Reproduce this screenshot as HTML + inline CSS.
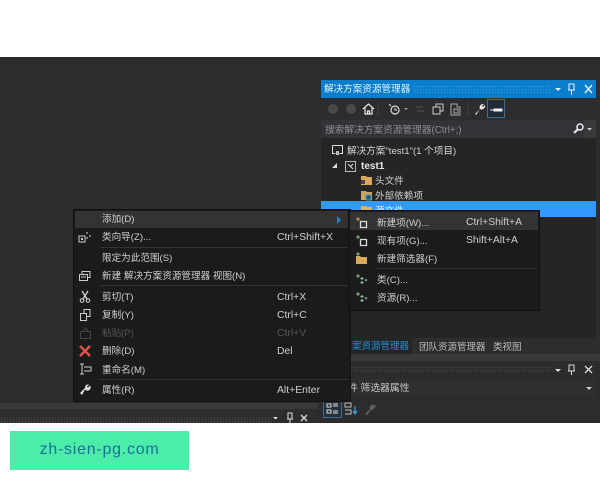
<!DOCTYPE html>
<html><head><meta charset="utf-8">
<style>
html,body{margin:0;padding:0;background:#fff}
#p{position:relative;width:600px;height:480px;overflow:hidden;background:#fff;font-family:"Liberation Sans","Noto Sans CJK SC",sans-serif;font-size:9.6px;color:#cfcfcf;filter:blur(.35px)}
#p div,#p svg{position:absolute}
.t{white-space:nowrap;line-height:14px;height:14px}
.s{font-size:10.400px}
.d{background-image:radial-gradient(#434346 35%,transparent 40%);background-size:3px 3px}
.db{background-image:radial-gradient(#2f93d8 35%,transparent 40%);background-size:3px 3px}
</style></head><body><div id="p">
<div style="left:0;top:57px;width:600px;height:366px;background:#2c2c2e"></div>

<!-- solution explorer -->
<div style="left:320px;top:79px;width:280px;height:261px;background:#2d2d30"></div>
<div style="left:321px;top:80px;width:275px;height:18px;background:#0a7dcc"></div>
<div class="db" style="left:413px;top:85px;width:138px;height:8px"></div>
<div class="t" style="left:324px;top:82px;color:#e4f2fb;font-size:9.600px;line-height:16px">解决方案资源管理器</div>
<svg style="left:550px;top:82px" width="46" height="14" viewBox="0 0 46 14"><path d="M5 6h6l-3 3z" fill="#e8f4fb"/><path d="M19 2h5v6h-5zM21.500 8v5M18 8h7" stroke="#e8f4fb" fill="none"/><path d="M35 3l7 8M42 3l-7 8" stroke="#e8f4fb" stroke-width="1.400"/></svg>
<div style="left:321px;top:98px;width:275px;height:22px;background:#2d2d30"></div>
<svg style="left:321px;top:98px" width="275" height="22" viewBox="0 0 275 22">
<circle cx="12" cy="11" r="5" fill="#4a4a4d"/><circle cx="30" cy="11" r="5" fill="#4a4a4d"/>
<path d="M42 11l5.500-5 5.500 5M44 10v6h7v-6M46.500 16v-3h2v3" stroke="#e8e8e8" fill="none" stroke-width="1.200"/>
<path d="M57 4v14" stroke="#3f3f42"/>
<circle cx="74" cy="12" r="4" stroke="#ddd" fill="none" stroke-width="1.200"/><path d="M74 10v2h2M68 6l2 2" stroke="#ddd" fill="none"/>
<path d="M83 10h4l-2 2z" fill="#999"/><path d="M95 9h7M103 13h-7" stroke="#555" fill="none"/>
<path d="M112 9h7v7h-7zM115 9V6h7v7h-3" stroke="#ccc" fill="none"/>
<path d="M130 6h6v3h3v8h-9zM133 11h4v4h-4z" stroke="#aaa" fill="none"/>
<path d="M147 4v14" stroke="#3f3f42"/>
<path d="M154 16l5-5a3.500 3.500 0 0 1 4-5l-2 2 1 1 2-2a3.500 3.500 0 0 1-5 4l-4 6z" fill="#e4e4e4"/>
<rect x="166.500" y="1.500" width="17" height="18" fill="#222a33" stroke="#3d6a8e"/><path d="M173 11h8v2h-8zM169 12h4" stroke="#eee" fill="#eee"/>
</svg>
<div style="left:321px;top:120px;width:275px;height:18px;background:#333337"></div>
<div class="t" style="left:325px;top:124px;color:#8e8e90;font-size:9.700px">搜索解决方案资源管理器(Ctrl+;)</div>
<div style="left:584px;top:120px;width:12px;height:18px;background:#3a3a3d"></div>
<svg style="left:571px;top:122px" width="24" height="14" viewBox="0 0 24 14"><circle cx="9" cy="5" r="3" stroke="#eee" fill="none" stroke-width="1.500"/><path d="M7 7l-4 4" stroke="#eee" stroke-width="2"/><path d="M16 6h5l-2.500 2.500z" fill="#ccc"/></svg>
<div style="left:321px;top:138px;width:275px;height:200px;background:#252526"></div>
<svg style="left:331px;top:144px" width="14" height="13" viewBox="0 0 14 13"><path d="M1.500 1.500h10v8h-3M1.500 1.500v8h3" stroke="#ddd" fill="none"/><path d="M5 7h3v4H5z" fill="#bbb"/></svg>
<div class="t" style="left:347px;top:145px;font-size:9.600px;color:#d6d6d6">解决方案"test1"(1 个项目)</div>
<svg style="left:329px;top:160px" width="30" height="13" viewBox="0 0 30 13"><path d="M3 8h5V3z" fill="#ddd"/><path d="M16.500 1.500h10v10h-10z" stroke="#bbb" fill="none"/><path d="M19 4l5 5M24 4l-3 3" stroke="#ddd"/></svg>
<div class="t" style="left:361px;top:160px;font-size:10px;font-weight:bold;color:#e6e6e6">test1</div>
<svg style="left:360px;top:174px" width="13" height="12" viewBox="0 0 13 12"><path d="M1 2h5l1 1h5v8H1z" fill="#d8a95b"/><path d="M1 6h4v4H1z" fill="#444"/></svg>
<div class="t" style="left:375px;top:175px;color:#d2d2d2">头文件</div>
<svg style="left:360px;top:189px" width="13" height="12" viewBox="0 0 13 12"><path d="M1 2h5l1 1h5v8H1z" fill="#c9a45f"/><path d="M6 6h5v5H6z" fill="#2c5566" stroke="#3fa0b8"/></svg>
<div class="t" style="left:375px;top:190px;color:#d2d2d2">外部依赖项</div>
<div style="left:321px;top:201px;width:275px;height:16px;background:#3399ff"></div>
<svg style="left:360px;top:205px" width="13" height="9" viewBox="0 0 13 9"><path d="M1 1h5l1 1h5v7H1z" fill="#d8b56b"/></svg>
<div class="t" style="left:375px;top:205px;color:#e8f3ff">源文件</div>

<!-- tabs + lower panel -->
<div style="left:350px;top:338px;width:250px;height:16px;background:#2d2d30"></div>
<div style="left:350px;top:338px;width:62px;height:16px;background:#252526"></div>
<div class="t" style="left:352px;top:340px;font-size:9.500px;color:#1f8fd8">案资源管理器</div>
<div class="t" style="left:419px;top:341px;font-size:9.500px;color:#bcbcbc">团队资源管理器</div>
<div class="t" style="left:493px;top:341px;font-size:9.500px;color:#bcbcbc">类视图</div>
<div style="left:350px;top:354px;width:250px;height:7px;background:#3a3a3c"></div>
<div class="d" style="left:350px;top:366px;width:203px;height:7px"></div>
<svg style="left:550px;top:362px" width="46" height="14" viewBox="0 0 46 14"><path d="M5 7h6l-3 3z" fill="#ddd"/><path d="M19 3h5v6h-5zM21.500 9v4M18 9h7" stroke="#ddd" fill="none"/><path d="M35 4l7 7M42 4l-7 7" stroke="#ddd" stroke-width="1.300"/></svg>
<div style="left:350px;top:379px;width:246px;height:18px;background:#2f2f32"></div>
<div class="t" style="left:348px;top:382px;font-size:9.800px;color:#c8c8c8">件 筛选器属性</div>
<svg style="left:585px;top:386px" width="8" height="6"><path d="M1 1h6L4 4z" fill="#ccc"/></svg>
<svg style="left:323px;top:400px" width="60" height="18" viewBox="0 0 60 18"><rect x=".5" y=".5" width="18" height="17" fill="#26303a" stroke="#3d6a8e"/><path d="M4 4h4v3H4zM4 10h4v3H4zM10 4h5M10 6h5M10 11h5M10 13h5" stroke="#ddd" fill="none"/><path d="M22 3h6v4h-6zM22 10h6v4h-6" stroke="#bbb" fill="none"/><path d="M32 6v7M30 11l2 3 2-3" stroke="#3d9de0" fill="none" stroke-width="1.300"/><path d="M42 14l5-5a3 3 0 0 1 4-4l2 1-2 3-3 1-4 5z" fill="#5e5e60"/></svg>

<!-- bottom left panel -->
<div style="left:0;top:403px;width:318px;height:6px;background:#3a3a3c"></div>
<div style="left:0;top:409px;width:318px;height:14px;background:#2d2d30"></div>
<div class="d" style="left:0;top:417px;width:272px;height:6px"></div>
<svg style="left:272px;top:412px" width="46" height="11" viewBox="0 0 46 11"><path d="M1 5h5L3.500 7.500z" fill="#ddd"/><path d="M16 1h4v6h-4zM18 7v4M15 7h6" stroke="#ddd" fill="none"/><path d="M29 3l6 6M35 3l-6 6" stroke="#ddd" stroke-width="1.300"/></svg>
<div style="left:0;top:423px;width:600px;height:57px;background:#fff"></div>

<!-- context menu -->
<div style="left:74px;top:210px;width:276px;height:191px;background:#1b1b1c;box-shadow:0 0 0 1px #111"></div>
<div style="left:75px;top:211px;width:274px;height:17px;background:#333334"></div>
<div style="left:100px;top:247px;width:248px;height:1px;background:#333335"></div>
<div style="left:100px;top:285px;width:248px;height:1px;background:#333335"></div>
<div style="left:100px;top:379px;width:248px;height:1px;background:#333335"></div>
<svg style="left:336px;top:216px" width="6" height="8"><path d="M1 0l4 4-4 4z" fill="#2f7fc0"/></svg>
<div class="t" style="left:102px;top:213px">添加(D)</div>
<div class="t" style="left:102px;top:231px">类向导(Z)...</div><div class="t s" style="left:277px;top:231px">Ctrl+Shift+X</div>
<div class="t" style="left:102px;top:252px">限定为此范围(S)</div>
<div class="t" style="left:102px;top:270px">新建 解决方案资源管理器 视图(N)</div>
<div class="t" style="left:102px;top:291px">剪切(T)</div><div class="t s" style="left:277px;top:291px">Ctrl+X</div>
<div class="t" style="left:102px;top:309px">复制(Y)</div><div class="t s" style="left:277px;top:309px">Ctrl+C</div>
<div class="t" style="left:102px;top:327px;color:#555">粘贴(P)</div><div class="t s" style="left:277px;top:327px;color:#555">Ctrl+V</div>
<div class="t" style="left:102px;top:345px">删除(D)</div><div class="t s" style="left:277px;top:345px">Del</div>
<div class="t" style="left:102px;top:364px">重命名(M)</div>
<div class="t" style="left:102px;top:384px">属性(R)</div><div class="t s" style="left:277px;top:384px">Alt+Enter</div>
<svg style="left:78px;top:230px" width="14" height="14" viewBox="0 0 14 14"><path d="M1 6h6v6H1z" stroke="#ccc" fill="none"/><path d="M3 8h2v2H3z" fill="#ccc"/><path d="M9 2l1 1-1 1-1-1zM12 5l1 1-1 1-1-1zM9 7l1 1-1 1-1-1z" fill="#ddd"/></svg>
<svg style="left:78px;top:269px" width="14" height="13" viewBox="0 0 14 13"><path d="M1.500 5.500h8v6h-8zM4 5V2.500h8v6h-2" stroke="#ccc" fill="none"/><path d="M3 8h5" stroke="#ccc"/></svg>
<svg style="left:79px;top:290px" width="12" height="13" viewBox="0 0 12 13"><path d="M3 1l5 8M9 1L4 9" stroke="#ddd" stroke-width="1.200"/><circle cx="3" cy="10.500" r="1.800" stroke="#ddd" fill="none"/><circle cx="9" cy="10.500" r="1.800" stroke="#ddd" fill="none"/></svg>
<svg style="left:79px;top:308px" width="13" height="14" viewBox="0 0 13 14"><path d="M1.500 5.500h6v7h-6zM5 5V1.500h6v7H8" stroke="#ccc" fill="none"/></svg>
<svg style="left:79px;top:326px" width="13" height="14" viewBox="0 0 13 14"><path d="M1.500 5.500h10v7h-10zM4 5l2.500-3L9 5" stroke="#444" fill="none"/></svg>
<svg style="left:79px;top:345px" width="12" height="12" viewBox="0 0 12 12"><path d="M1 1l10 10M11 1L1 11" stroke="#e2534d" stroke-width="2.400"/></svg>
<svg style="left:79px;top:363px" width="13" height="12" viewBox="0 0 13 12"><path d="M3 1v10M1 1h4M1 11h4M5 4h7v4H5" stroke="#ccc" fill="none"/></svg>
<svg style="left:80px;top:384px" width="11" height="11" viewBox="0 0 11 11"><path d="M0 9l5-5a3.200 3.200 0 0 1 4-3.500L7 2.500l1 1 2-2a3.200 3.200 0 0 1-5 4L2 11z" fill="#ddd"/></svg>

<!-- submenu -->
<div style="left:349px;top:211px;width:190px;height:99px;background:#1b1b1c;box-shadow:0 0 0 1px #111"></div>
<div style="left:350px;top:212px;width:188px;height:18px;background:#333334"></div>
<div style="left:375px;top:268px;width:162px;height:1px;background:#333335"></div>
<div class="t" style="left:377px;top:217px">新建项(W)...</div><div class="t s" style="left:466px;top:216px">Ctrl+Shift+A</div>
<div class="t" style="left:377px;top:235px">现有项(G)...</div><div class="t s" style="left:466px;top:234px">Shift+Alt+A</div>
<div class="t" style="left:377px;top:253px">新建筛选器(F)</div>
<div class="t" style="left:377px;top:274px">类(C)...</div>
<div class="t" style="left:377px;top:292px">资源(R)...</div>
<svg style="left:355px;top:216px" width="13" height="13" viewBox="0 0 13 13"><path d="M5.500 5.500h6v6h-6z" stroke="#ddd" stroke-width="1.300" fill="none"/><path d="M3 1v4M1 3h4" stroke="#c9a45f"/></svg>
<svg style="left:355px;top:234px" width="13" height="13" viewBox="0 0 13 13"><path d="M5.500 5.500h6v6h-6z" stroke="#ddd" stroke-width="1.300" fill="none"/><path d="M3 1v4M1 3h4" stroke="#7fbf7f"/></svg>
<svg style="left:355px;top:252px" width="13" height="13" viewBox="0 0 13 13"><path d="M1 4h4l1 1h6v7H1z" fill="#d8a95b"/><path d="M3 0v4M1 2h4" stroke="#7fbf7f"/></svg>
<svg style="left:355px;top:273px" width="13" height="12" viewBox="0 0 13 12"><path d="M3 1v4M1 3h4" stroke="#7fbf7f"/><path d="M7 4l2 1.500L7 7 5 5.500zM11 6l1.500 1L11 8.500 9.500 7zM7 8l2 1.500L7 11 5 9.500z" fill="#8fb09a"/></svg>
<svg style="left:355px;top:291px" width="13" height="12" viewBox="0 0 13 12"><path d="M3 1v4M1 3h4" stroke="#7fbf7f"/><path d="M7 4l2 1.500L7 7 5 5.500zM11 6l1.500 1L11 8.500 9.500 7zM7 8l2 1.500L7 11 5 9.500z" fill="#8fb09a"/></svg>

<!-- badge -->
<div style="left:10px;top:431px;width:179px;height:39px;background:#4ceda8"></div>
<div style="left:10px;top:431px;width:179px;height:39px;line-height:38px;text-align:center;font-size:16px;color:#1c6f9c;letter-spacing:.75px;white-space:nowrap">zh-sien-pg.com</div>
</div></body></html>
